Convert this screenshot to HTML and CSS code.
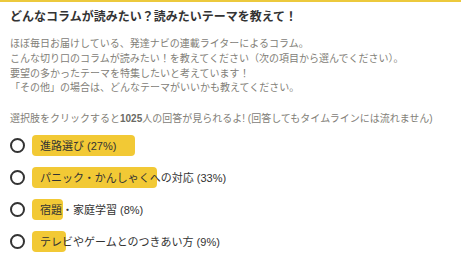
FILE: index.html
```html
<!DOCTYPE html>
<html lang="ja">
<head>
<meta charset="utf-8">
<link rel="stylesheet" href="styles.css">
</head>
<body>
<div class="page">
  <h1 class="title">どんなコラムが読みたい？読みたいテーマを教えて！</h1>
  <p class="desc">ほぼ毎日お届けしている、発達ナビの連載ライターによるコラム。<br>こんな切り口のコラムが読みたい！を教えてください（次の項目から選んでください）。<br>要望の多かったテーマを特集したいと考えています！<br>「その他」の場合は、どんなテーマがいいかも教えてください。</p>
  <p class="note">選択肢をクリックすると<b>1025</b>人の回答が見られるよ! (回答してもタイムラインには流れません)</p>
  <ul class="options">
    <li class="option"><span class="radio"></span><span class="label"><span class="bar" style="width:103px"></span><span class="text">進路選び (27%)</span></span></li>
    <li class="option"><span class="radio"></span><span class="label"><span class="bar" style="width:125px"></span><span class="text">パニック・かんしゃくへの対応 (33%)</span></span></li>
    <li class="option"><span class="radio"></span><span class="label"><span class="bar" style="width:31px"></span><span class="text">宿題・家庭学習 (8%)</span></span></li>
    <li class="option"><span class="radio"></span><span class="label"><span class="bar" style="width:34px"></span><span class="text">テレビやゲームとのつきあい方 (9%)</span></span></li>
  </ul>
</div>
</body>
</html>
```
FILE: styles.css
```css
html, body {
  margin: 0;
  padding: 0;
  background: #ffffff;
}
body {
  border-top: 2px solid #ecc93c;
  font-family: "Liberation Sans", "Noto Sans CJK JP", sans-serif;
  overflow: hidden;
}
.page {
  padding: 7px 10px 0 10px;
}
.title {
  margin: 0;
  font-size: 12px;
  line-height: 16px;
  font-weight: bold;
  color: #333333;
}
.desc {
  margin: 12px 0 0 0;
  font-size: 10px;
  line-height: 14.8px;
  color: #828078;
}
.note {
  margin: 16px 0 0 0;
  font-size: 10px;
  line-height: 14.67px;
  color: #828078;
}
.note b {
  font-weight: bold;
  color: #6a6a64;
}
.options {
  list-style: none;
  margin: 8px 0 0 0;
  padding: 0;
  display: flex;
  flex-direction: column;
  gap: 11px;
}
.option {
  display: flex;
  align-items: center;
  gap: 7px;
  height: 21px;
}
.radio {
  flex: none;
  width: 11px;
  height: 11px;
  border: 2px solid #333333;
  border-radius: 50%;
}
.label {
  position: relative;
  height: 21px;
  display: flex;
  align-items: center;
}
.bar {
  position: absolute;
  left: 0;
  top: 0;
  height: 21px;
  background: #f2c935;
  border-radius: 4px;
}
.text {
  position: relative;
  padding-left: 8px;
  font-size: 11px;
  color: #333333;
  white-space: nowrap;
}
```
